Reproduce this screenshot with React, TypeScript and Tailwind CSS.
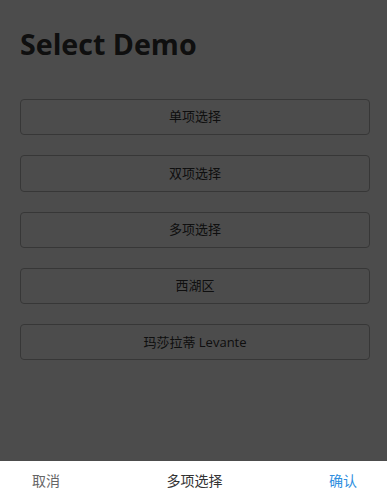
import React from 'react';

const options = ['单项选择', '双项选择', '多项选择', '西湖区', '玛莎拉蒂 Levante'];

export default function App() {
  return (
    <div
      className="relative h-[500px] w-full overflow-hidden bg-white"
      style={{ fontFamily: '"Open Sans", "Noto Sans CJK SC", sans-serif' }}
    >
      <div className="pl-5 pr-[17px] pt-[22px]">
        <h1 className="text-[28.6px] font-bold leading-[44px] text-[#333]">Select Demo</h1>
        <div className="mt-[33px] flex flex-col gap-[20px]">
          {options.map((o) => (
            <button
              key={o}
              className="h-[36.3px] w-full rounded-[4px] border border-[#b8b8b8] bg-white text-[13px] text-[#333]"
            >
              {o}
            </button>
          ))}
        </div>
      </div>

      <div className="absolute inset-0 bg-black/70" />

      <div className="absolute bottom-0 left-0 right-0 flex h-[39px] items-center justify-between bg-white pl-[32px] pr-[30px] text-[14px]">
        <span className="text-[#666]">取消</span>
        <span className="text-[#333]">多项选择</span>
        <span className="text-[#2f8fe0]">确认</span>
      </div>
    </div>
  );
}
